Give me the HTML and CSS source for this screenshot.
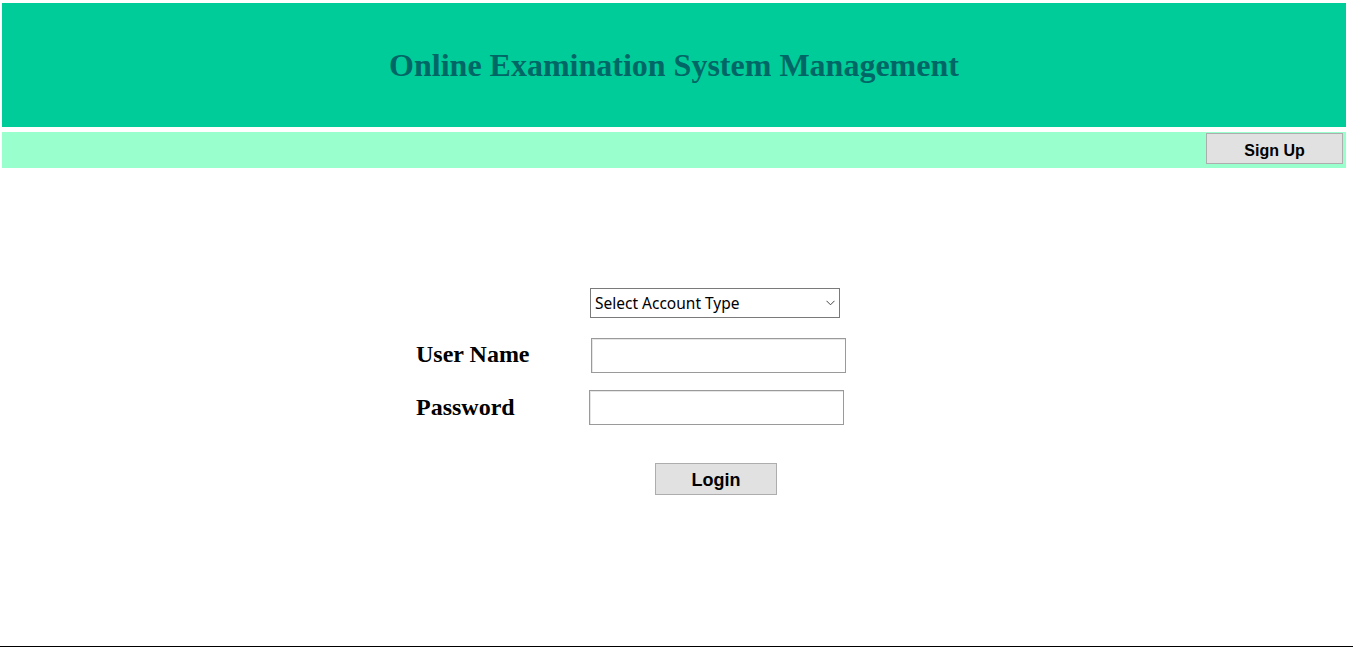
FILE: index.html
```html
<!DOCTYPE html>
<html>
<head>
<meta charset="utf-8">
<title>Online Examination System Management</title>
<link rel="stylesheet" href="styles.css">
</head>
<body>
<div class="page">
  <header class="banner">
    <h1 class="title">Online Examination System Management</h1>
  </header>
  <nav class="navbar">
    <button class="btn btn-signup" type="button">Sign Up</button>
  </nav>
  <main class="main">
    <form class="login-form">
      <div class="row row-select">
        <div class="label-col"></div>
        <div class="select-wrap">
          <select class="account-select">
            <option>Select Account Type</option>
            <option>Admin</option>
            <option>Student</option>
          </select>
          <svg class="chev" width="9" height="6" viewBox="0 0 9 6"><path d="M0.5 0.8 L4.5 4.8 L8.5 0.8" fill="none" stroke="#444" stroke-width="1"/></svg>
        </div>
      </div>
      <div class="row row-user">
        <label class="label label-col">User Name</label>
        <input class="field field-user" type="text">
      </div>
      <div class="row row-pass">
        <label class="label label-col">Password</label>
        <input class="field field-pass" type="password">
      </div>
      <div class="row row-submit">
        <div class="label-col"></div>
        <button class="btn btn-login" type="button">Login</button>
      </div>
    </form>
  </main>
  <div class="bottom-line"></div>
</div>
</body>
</html>
```
FILE: styles.css
```css
html, body {
  margin: 0;
  padding: 0;
  background: #ffffff;
}
.page {
  padding: 3px 7px 0 2px;
  font-family: "Liberation Serif", "Times New Roman", serif;
}
.banner {
  height: 124px;
  background: #00cc99;
  display: flex;
  align-items: center;
  justify-content: center;
}
.title {
  margin: 0;
  font-family: "Liberation Serif", "Times New Roman", serif;
  font-size: 32px;
  font-weight: bold;
  color: #006666;
}
.navbar {
  margin-top: 5px;
  height: 36px;
  background: #99ffcc;
  display: flex;
  justify-content: flex-end;
  align-items: flex-start;
  padding-right: 3px;
}
.btn {
  font-family: "Liberation Sans", Arial, sans-serif;
  font-weight: bold;
  color: #000;
  background: #e1e1e1;
  border: 1px solid #adadad;
  padding: 0;
  margin: 0;
}
.btn-signup {
  margin-top: 1px;
  width: 137px;
  height: 31px;
  font-size: 16px;
  padding-top: 4px;
}
.main {
  height: 478px;
  padding-top: 120px;
  box-sizing: border-box;
  margin-left: -2px;
}
.login-form {
  display: flex;
  flex-direction: column;
  margin-left: 416px;
}
.row {
  display: flex;
  align-items: center;
}
.label-col {
  width: 174px;
  flex: none;
}
.row-select {
  margin-bottom: 20px;
}
.row-user {
  margin-bottom: 17px;
}
.row-submit {
  margin-top: 38px;
}
.select-wrap {
  position: relative;
  width: 250px;
  height: 30px;
}
.account-select {
  appearance: none;
  -webkit-appearance: none;
  width: 250px;
  height: 30px;
  border: 1px solid #7a7a7a;
  border-radius: 0;
  background: #fff;
  font-family: "Noto Sans", "Open Sans", sans-serif;
  font-size: 15.5px;
  color: #000;
  padding: 0 0 0 4px;
  margin: 0;
}
.chev {
  position: absolute;
  right: 5px;
  top: 12px;
  pointer-events: none;
}
.label {
  font-family: "Liberation Serif", "Times New Roman", serif;
  font-size: 24px;
  font-weight: bold;
  color: #000;
  line-height: 27px;
}
.row-user .label {
  margin-top: -3px;
}
.field {
  box-sizing: border-box;
  width: 255px;
  height: 35px;
  border: 1px solid #9a9a9a;
  box-shadow: inset 1px 1px 0 #e6e6e6;
  margin: 0;
  padding: 0 4px;
  font-size: 15px;
  background: #fff;
}
.field-user {
  margin-left: 1px;
}
.field-pass {
  margin-left: -1px;
}
.btn-login {
  margin-left: 65px;
  width: 122px;
  height: 32px;
  font-size: 18px;
  padding-top: 2px;
}
.bottom-line {
  height: 1px;
  background: #000;
  margin: 0 -7px 0 -2px;
}
```
